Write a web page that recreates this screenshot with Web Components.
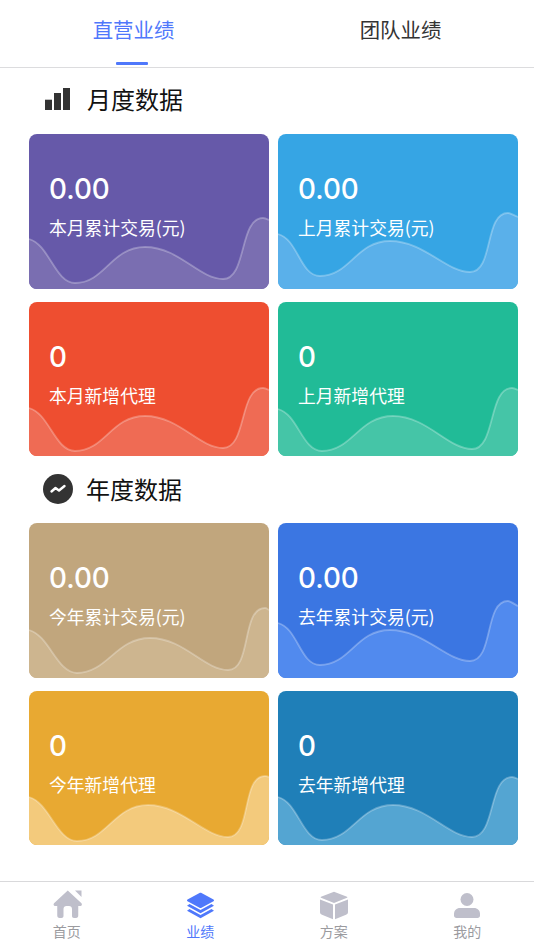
<!DOCTYPE html>
<html lang="zh-CN"><head><meta charset="utf-8"><title>业绩</title>
<style>
html,body{margin:0;padding:0;background:#fff}
body{font-family:"Noto Sans CJK SC","Noto Sans",sans-serif;width:534px;height:950px;overflow:hidden}
</style></head><body>
<app-page>
  <top-tabs></top-tabs>
  <section-heading icon="bars" style="--gap:17px;--left:45px;--h:66px;--pb:4px;--tb:2px">月度数据</section-heading>
  <card-grid>
    <stat-card color="#6659a9" fill="#7a6eb1" value="0.00" label="本月累计交易(元)" wave="105,46,149,116,113,194,145,234,84,86"></stat-card>
    <stat-card color="#36a5e4" fill="#5ab0ea" value="0.00" label="上月累计交易(元)" wave="100,42,142,112,107,192,138,230,79,83"></stat-card>
    <stat-card color="#ee4e30" fill="#ef6b54" value="0" label="本月新增代理" wave="106,46,149,116,114,194,146,234,86,88"></stat-card>
    <stat-card color="#21bb97" fill="#45c5a7" value="0" label="上月新增代理" wave="107,44,149,115,114,194,147,234,86,88"></stat-card>
  </card-grid>
  <section-heading icon="trend" style="--gap:13px;--left:43px;--h:66.67px;--pb:1px;--tb:1px">年度数据</section-heading>
  <card-grid>
    <stat-card color="#c1a67d" fill="#cdb58f" value="0.00" label="今年累计交易(元)" wave="107,48,150,121,115,199,147,236,85,87"></stat-card>
    <stat-card color="#3b76e2" fill="#518aee" value="0.00" label="去年累计交易(元)" wave="100,42,142,112,107,192,138,230,78,83"></stat-card>
    <stat-card color="#e8a932" fill="#f3ca7c" value="0" label="今年新增代理" wave="106,48,150,119,114,199,146,236,85,86"></stat-card>
    <stat-card color="#1f7fb8" fill="#54a5d2" value="0" label="去年新增代理" wave="106,44,149,115,114,194,146,234,86,88"></stat-card>
  </card-grid>
  <bottom-nav></bottom-nav>
</app-page>
<script>
function el(name, html){
  customElements.define(name, class extends HTMLElement{
    connectedCallback(){
      if(this.shadowRoot) return;
      this.attachShadow({mode:'open'}).innerHTML = typeof html==='function' ? html(this) : html;
    }
  });
}
el('app-page',`<style>:host{display:flex;flex-direction:column;width:534px;height:950px;color:#111}</style><slot></slot>`);
el('top-tabs',`<style>
:host{display:flex;height:67px;border-bottom:1px solid #dcdcde;box-sizing:content-box;font-size:20.4px;color:#333}
div{flex:1;display:flex;flex-direction:column;align-items:center;position:relative;line-height:29px;padding-top:15px;box-sizing:border-box}
.a{color:#4f78fb}
.a::after{content:"";position:absolute;left:116px;bottom:2px;width:32px;height:3px;border-radius:1px;background:#4f78fb}
</style><div class="a">直营业绩</div><div>团队业绩</div>`);
const ICONS={
 bars:`<svg width="25" height="22" viewBox="0 0 25 22" fill="#333"><rect x="0" y="11.700" width="7" height="10.300"/><rect x="9" y="5" width="7" height="17"/><rect x="18" y="0" width="7" height="22"/></svg>`,
 trend:`<svg width="30" height="30" viewBox="0 0 30 30"><circle cx="15" cy="15" r="15" fill="#333"/><path d="M8.500 17.500 12.500 14 16 16.500 21.500 12" fill="none" stroke="#fff" stroke-width="2.400" stroke-linecap="round" stroke-linejoin="round"/></svg>`
};
el('section-heading',t=>`<style>
:host{display:flex;align-items:center;height:var(--h);box-sizing:border-box;padding:0 0 var(--pb) var(--left);gap:var(--gap);font-size:24px;color:#111}
svg{display:block;flex:none}
span{display:block;margin-bottom:var(--tb)}
</style>${ICONS[t.getAttribute('icon')]}<span><slot></slot></span>`);
el('card-grid',`<style>:host{display:grid;grid-template-columns:240px 240px;gap:13px 9px;padding:0 16px 0 29px}</style><slot></slot>`);
el('stat-card',t=>{
 const [y0,x1,y1,x2,y2,x3,y3,x4,y4,ye]=t.getAttribute('wave').split(',').map(Number);
 const d=`M0 ${y0}C20 ${y0+5} ${x1-20} ${y1} ${x1} ${y1}C${x1+30} ${y1} ${x2-34} ${y2} ${x2} ${y2}C${x2+34} ${y2} ${x3-24} ${y3} ${x3} ${y3}C${x3+24} ${y3} ${x4-24} ${y4} ${x4} ${y4}C${x4+2} ${y4} 238 ${ye-1} 240 ${ye}`;
 return `<style>
:host{display:block;position:relative;height:154.67px;border-radius:8px;overflow:hidden;background:${t.getAttribute('color')};color:#fff}
.t{position:relative;padding:35px 0 0 20px}
.v{font:500 27.800px/40px Inter,"Noto Sans",sans-serif}
.l{font-size:17.800px;line-height:26px;margin-top:5px}
svg{position:absolute;left:0;top:0;display:block}
</style><svg width="240" height="155" viewBox="0 0 240 155"><path d="${d}V155H0Z" fill="${t.getAttribute('fill')}"/><path d="${d}" fill="none" stroke="#fff" stroke-opacity=".28" stroke-width="1.800"/></svg>
<div class="t"><div class="v">${t.getAttribute('value')}</div><div class="l">${t.getAttribute('label')}</div></div>`;
});
el('bottom-nav',`<style>
:host{margin-top:auto;display:grid;grid-template-columns:repeat(4,1fr);height:68px;border-top:1px solid #d9d9db;box-sizing:content-box;font-size:14px;color:#9b9b9f;background:#fff}
div{display:flex;flex-direction:column;align-items:center;padding-top:8px;line-height:20px;gap:1px}
.a{color:#4f78fb}
svg{display:block;overflow:visible}
</style>
<div><svg width="30" height="30" viewBox="0 0 30 30" fill="#bfbfcb"><path d="M15.750.5 29.500 13.200C30.400 14.300 29.800 16 28.500 16H26.250V25.500C26.250 27 25.500 28 24 28H22C20.800 28 20 27.200 20 26V19C20 17 18.800 16 17 16H14.500C12.700 16 11.500 17 11.500 19V26C11.500 27.200 10.700 28 9.500 28H7.500C6 28 5.250 27 5.250 25.500V16H3C1.700 16 1.100 14.300 2 13.200Z"/><path d="M23 .5H29.500V7Z"/></svg><span>首页</span></div>
<div class="a"><svg width="30" height="30" viewBox="0 0 30 30" fill="#4f78fb"><path d="M14.500 3 C15 2.700 16 2.700 16.500 3L28.500 9.500C29.200 10 29.200 10.800 28.500 11.200L16.500 17.700C16 18 15 18 14.500 17.700L2.500 11.200C1.800 10.800 1.800 10 2.500 9.500Z"/><path d="M4.500 14 15.500 20 26.500 14 29 15.700 15.500 23.300 2 15.700Z"/><path d="M4.500 19 15.500 25 26.500 19 29 20.700 15.500 28.300 2 20.700Z"/></svg><span>业绩</span></div>
<div><svg width="30" height="30" viewBox="0 -1 30 30" fill="#bfbfcb"><path d="M15 .7 28 5.800C28.500 6 28.500 6.500 28 6.700L15 12 2 6.700C1.500 6.500 1.500 6 2 5.800Z"/><path d="M1 8.500 14 13.500V28.300L3 23.800C1.700 23.300 1 22.300 1 21Z"/><path d="M29 8.500 16 13.500V28.300L27 23.800C28.300 23.300 29 22.300 29 21Z"/></svg><span>方案</span></div>
<div><svg width="30" height="30" viewBox="0 -1 30 30" fill="#bfbfcb"><circle cx="15" cy="8.500" r="6.500"/><path d="M8 17H22C25.500 17 28 19.500 28 23V24.500C28 26 27 27 25.500 27H4.500C3 27 2 26 2 24.500V23C2 19.500 4.500 17 8 17Z"/></svg><span>我的</span></div>`);
</script>
</body></html>
